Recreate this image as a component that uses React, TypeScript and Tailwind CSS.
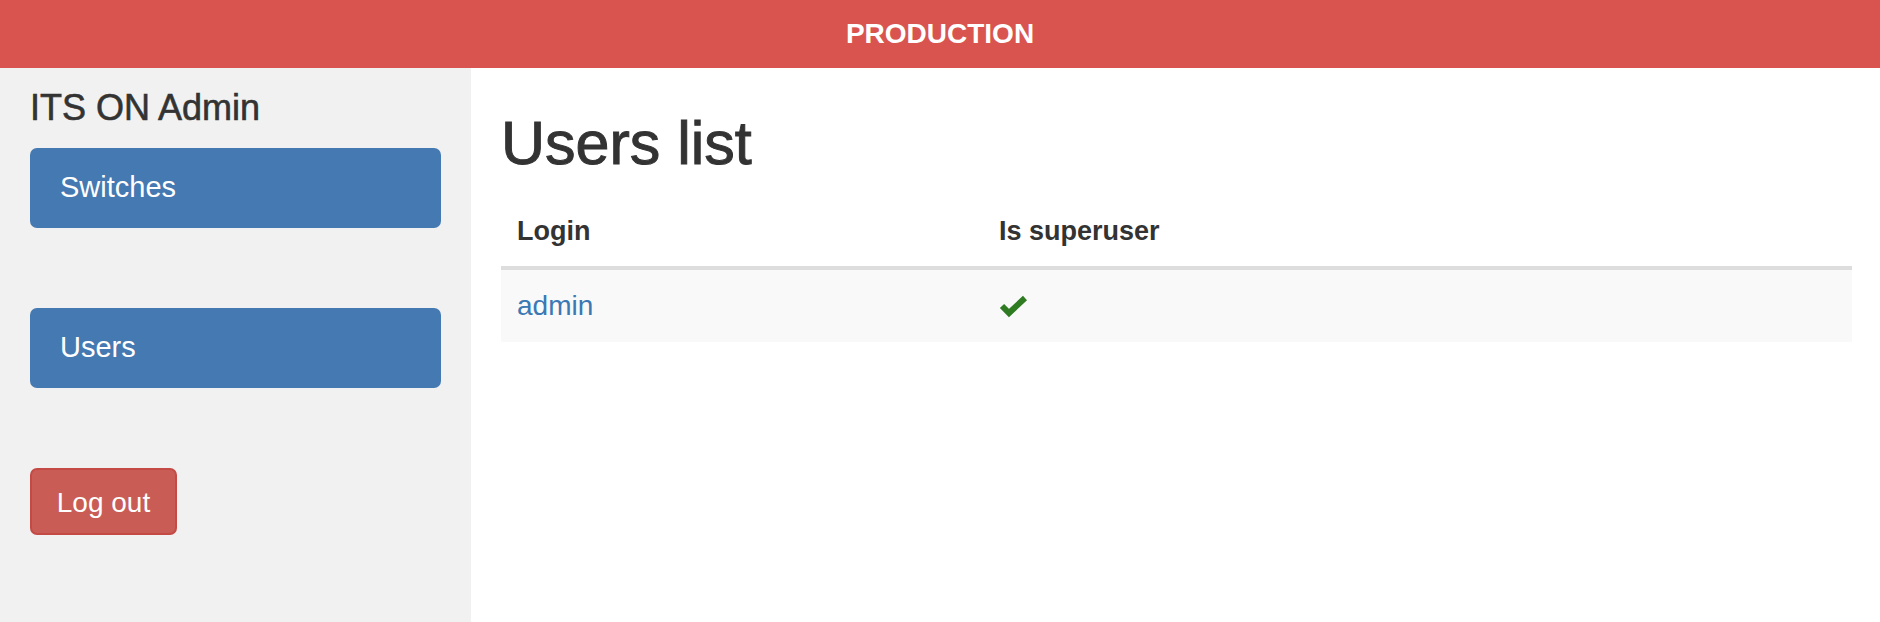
import React from "react";

interface User {
  login: string;
  isSuperuser: boolean;
}

const users: User[] = [{ login: "admin", isSuperuser: true }];

function CheckIcon() {
  return (
    <svg width="28" height="24" viewBox="0 0 28 24" className="block">
      <polyline
        points="3,12 10,19 26,4"
        fill="none"
        stroke="#2e7b22"
        strokeWidth="6"
        strokeLinecap="butt"
        strokeLinejoin="miter"
      />
    </svg>
  );
}

export default function App() {
  return (
    <div className="h-screen flex flex-col bg-white text-[#333333] font-['Liberation_Sans',Arial,sans-serif]">
      <div className="h-[68px] shrink-0 bg-[#d9544f] flex items-center justify-center">
        <span className="text-white font-bold text-[28px] leading-none">PRODUCTION</span>
      </div>

      <div className="flex-1 flex">
        {/* sidebar */}
        <aside className="w-[471px] shrink-0 bg-[#f1f1f1] px-[30px]">
          <h3 className="mt-[21px] text-[36px] leading-[38px] font-medium [-webkit-text-stroke:0.6px_#333333]">ITS ON Admin</h3>
          <nav className="mt-[21px] flex flex-col gap-[80px]">
            <a href="#" className="h-[80px] flex items-center pl-[30px] bg-[#4579b2] text-white text-[29px] rounded-[7px]">
              Switches
            </a>
            <a href="#" className="h-[80px] flex items-center pl-[30px] bg-[#4579b2] text-white text-[29px] rounded-[7px]">
              Users
            </a>
            <div>
              <button className="h-[67px] w-[147px] flex items-center justify-center pt-[2px] bg-[#c95c55] border-2 border-[#c44b45] text-white text-[28px] rounded-[7px]">
                Log out
              </button>
            </div>
          </nav>
        </aside>

        {/* main */}
        <main className="flex-1 pl-[30px] pr-[28px]">
          <h1 className="mt-[42px] text-[61px] leading-[66px] font-medium [-webkit-text-stroke:1px_#333333]">Users list</h1>
          <table className="mt-[24px] w-full border-collapse">
            <thead>
              <tr className="border-b-4 border-[#dddddd]">
                <th className="w-[482px] text-left align-bottom px-[16px] pt-[12px] pb-[16px] text-[27px] leading-[38px] font-bold">
                  Login
                </th>
                <th className="text-left align-bottom px-[16px] pt-[12px] pb-[16px] text-[27px] leading-[38px] font-bold">
                  Is superuser
                </th>
              </tr>
            </thead>
            <tbody>
              {users.map((u) => (
                <tr key={u.login} className="bg-[#f9f9f9]">
                  <td className="px-[16px] py-[17px] text-[28px] leading-[38px]">
                    <a href="#" className="text-[#3b78b4]">{u.login}</a>
                  </td>
                  <td className="px-[16px] py-[17px] text-[28px] leading-[38px]">
                    {u.isSuperuser && <CheckIcon />}
                  </td>
                </tr>
              ))}
            </tbody>
          </table>
        </main>
      </div>
    </div>
  );
}
